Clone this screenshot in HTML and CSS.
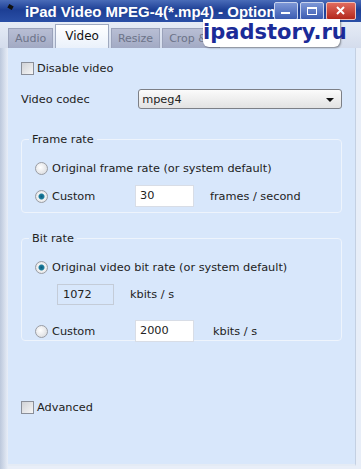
FILE: index.html
```html
<!DOCTYPE html>
<html lang="en">
<head>
    <meta charset="UTF-8">
    <title>iPad Video MPEG-4(*.mp4) - Options</title>
    <link rel="stylesheet" href="styles.css">
</head>
<body>
    <div class="window">
        <div class="titlebar">
            <span class="app-icon"></span>
            <span class="title">iPad Video MPEG-4(*.mp4) - Options</span>
            <div class="caption-buttons">
                <span class="cap-btn"><svg width="22" height="16" viewBox="0 0 22 16"><rect x="6" y="9" width="9" height="2" fill="#fff"/></svg></span>
                <span class="cap-btn"><svg width="22" height="16" viewBox="0 0 22 16"><rect x="6.5" y="4.5" width="9" height="7" fill="none" stroke="#fff"/><rect x="6" y="4" width="10" height="2" fill="#fff"/></svg></span>
                <span class="cap-btn close"><svg width="28" height="16" viewBox="0 0 28 16"><path d="M10 4 L17 11 M17 4 L10 11" stroke="#fff" stroke-width="2"/></svg></span>
            </div>
        </div>
        <div class="watermark">ipadstory.ru</div>

        <div class="tabs">
            <div class="tab">Audio</div>
            <div class="tab active">Video</div>
            <div class="tab">Resize</div>
            <div class="tab">Crop &amp; Pad</div>
        </div>

        <div class="panel">
            <label class="check-row"><span class="checkbox"></span>Disable video</label>

            <div class="codec-row">
                <span class="codec-label">Video codec</span>
                <div class="select">mpeg4<span class="arrow"></span></div>
            </div>

            <fieldset class="group frame-group">
                <legend>Frame rate</legend>
                <div class="radio-row"><span class="radio"></span>Original frame rate (or system default)</div>
                <div class="radio-row">
                    <span class="radio checked"></span><span class="opt-label">Custom</span>
                    <span class="field">30</span>
                    <span class="unit">frames / second</span>
                </div>
            </fieldset>

            <fieldset class="group bit-group">
                <legend>Bit rate</legend>
                <div class="radio-row"><span class="radio checked"></span>Original video bit rate (or system default)</div>
                <div class="readonly-row">
                    <span class="field disabled">1072</span>
                    <span class="unit">kbits / s</span>
                </div>
                <div class="radio-row">
                    <span class="radio"></span><span class="opt-label">Custom</span>
                    <span class="field">2000</span>
                    <span class="unit wide">kbits / s</span>
                </div>
            </fieldset>

            <label class="check-row advanced"><span class="checkbox"></span>Advanced</label>
        </div>
    </div>
</body>
</html>
```

FILE: styles.css
```css
body {
    margin: 0;
    font-family: "DejaVu Sans", Verdana, sans-serif;
    font-size: 11.3px;
    color: #222;
    background: #e6ecf6;
}

.window {
    position: relative;
    width: 361px;
    height: 469px;
    overflow: hidden;
    background: linear-gradient(to right, #bcc8dc 0, #e8eef8 8px);
}

.titlebar {
    display: flex;
    align-items: center;
    height: 22px;
    background: linear-gradient(to bottom, #4a6cb8 0, #1d3f95 45%, #2a4fa6 100%);
    color: #fff;
}

.app-icon {
    width: 5px;
    height: 4px;
    margin: 0 0 8px 8px;
    background: #111;
    transform: rotate(30deg);
}

.title {
    margin-left: 12px;
    font-family: "Liberation Sans", Arial, sans-serif;
    font-weight: bold;
    font-size: 15px;
    white-space: nowrap;
    flex: 1;
    overflow: hidden;
}

.caption-buttons {
    display: flex;
    gap: 2px;
    padding-right: 5px;
}

.cap-btn {
    display: flex;
    height: 16px;
    border: 1px solid #c9d4ee;
    border-radius: 2px;
    background: linear-gradient(to bottom, #7d97d6, #3b5cb2);
}

.cap-btn.close {
    background: linear-gradient(to bottom, #e06b5e, #b3281c);
    border-color: #f0c0b8;
}

.watermark {
    position: absolute;
    left: 203px;
    top: 19px;
    width: 137px;
    height: 28px;
    line-height: 27px;
    text-align: center;
    background: #fff;
    border-radius: 0 0 6px 6px;
    box-shadow: 1px 1px 2px rgba(0, 0, 0, 0.4);
    color: #1b2b98;
    font-family: "DejaVu Sans", sans-serif;
    font-weight: bold;
    font-size: 21px;
}

.tabs {
    display: flex;
    align-items: flex-end;
    gap: 2px;
    height: 26px;
    padding-left: 8px;
    background: linear-gradient(to bottom, #e6ecf6, #d4dcec);
}

.tab {
    height: 19px;
    line-height: 19px;
    padding: 0 6px;
    background: linear-gradient(to bottom, #b8bed4, #a2aac4);
    border: 1px solid #9aa2ba;
    border-bottom: none;
    color: #6c7388;
    font-size: 11px;
}

.tab:last-child {
    width: 44px;
    overflow: hidden;
    white-space: nowrap;
}

.tab.active {
    height: 23px;
    line-height: 22px;
    padding: 0 9px;
    background: linear-gradient(to bottom, #ffffff, #eaf1fb);
    color: #111;
    font-size: 12px;
    border-color: #a0aac0;
}

.panel {
    margin-left: 8px;
    width: 348px;
    height: 418px;
    box-sizing: border-box;
    padding: 14px 13px 0 13px;
    background: #d8e7fb;
    border-right: 1px solid #c4d0e2;
    border-bottom: 2px solid #e4ebf5;
}

.check-row {
    display: flex;
    align-items: center;
    gap: 3px;
}

.checkbox {
    width: 11px;
    height: 11px;
    border: 1px solid #8a8f99;
    background: linear-gradient(135deg, #d0d2d6, #f6f6f6);
}

.codec-row {
    display: flex;
    align-items: center;
    margin-top: 14px;
}

.codec-label {
    width: 119px;
}

.select {
    position: relative;
    width: 207px;
    height: 20px;
    line-height: 20px;
    box-sizing: border-box;
    padding-left: 3px;
    border: 1px solid #7c7f86;
    border-radius: 3px;
    background: linear-gradient(to bottom, #fbfbfb, #e2e2e2);
}

.arrow {
    position: absolute;
    right: 7px;
    top: 8px;
    border: 4px solid transparent;
    border-top: 4px solid #111;
    border-bottom: none;
}

.group {
    margin: 0;
    padding: 0 0 0 13px;
    border: 1px solid #eef4fc;
    border-radius: 4px;
}

.group legend {
    padding: 0 3px;
    margin-left: -6px;
}

.frame-group {
    margin-top: 24px;
    height: 67px;
    padding-top: 11px;
}

.bit-group {
    margin-top: 19px;
    height: 96px;
    padding-top: 11px;
}

.radio-row {
    display: flex;
    align-items: center;
    height: 22px;
    margin-bottom: 6px;
}

.radio {
    width: 11px;
    height: 11px;
    margin-right: 4px;
    border: 1px solid #9a9da4;
    border-radius: 50%;
    background: radial-gradient(circle at 40% 40%, #fff, #d4d6da);
}

.radio.checked {
    background: radial-gradient(circle, #0b5c7c 0, #1f7fa0 2.5px, #f4f4f4 3.5px, #d4d6da 100%);
}

.opt-label {
    width: 83px;
}

.field {
    width: 59px;
    height: 22px;
    line-height: 20px;
    box-sizing: border-box;
    padding-left: 4px;
    border: 1px solid #d8dde6;
    background: #fff;
}

.unit {
    margin-left: 16px;
}

.unit.wide {
    margin-left: 19px;
}

.readonly-row {
    display: flex;
    align-items: center;
    margin: 2px 0 15px 22px;
}

.field.disabled {
    width: 57px;
    height: 21px;
    padding-left: 5px;
    background: transparent;
    border: 1px solid #c4ccd8;
}

.advanced {
    margin-top: 60px;
}
```
